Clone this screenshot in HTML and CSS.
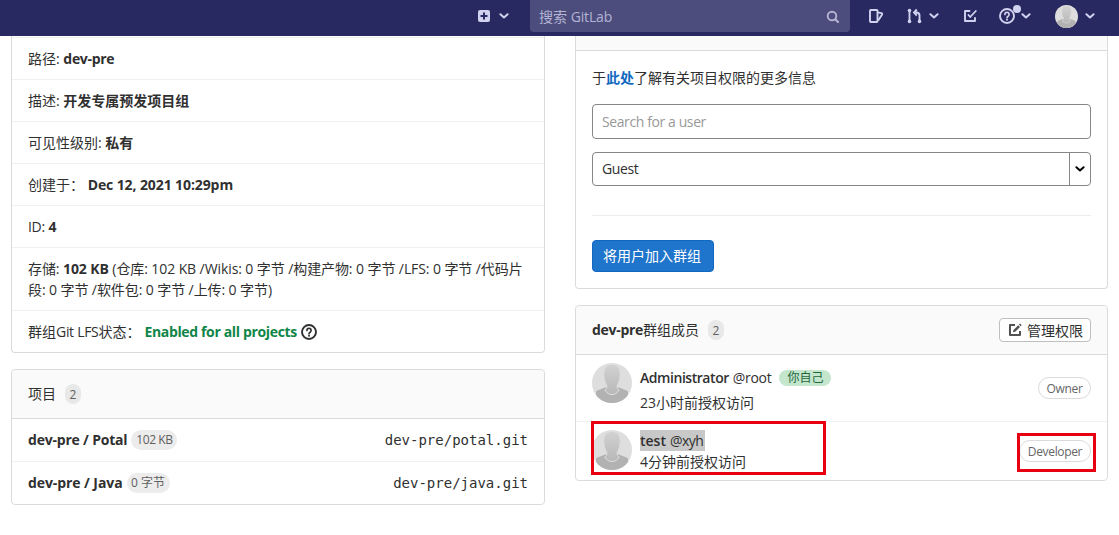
FILE: index.html
```
<!DOCTYPE html>
<html lang="zh-CN">
<head>
  <meta charset="UTF-8">
  <meta name="viewport" content="width=device-width, initial-scale=1.0">
  <title>dev-pre · 群组 · GitLab</title>
  <link rel="stylesheet" href="styles.css">
</head>
<body>

  <!-- 公用图标 -->
  <svg class="sprite" aria-hidden="true">
    <symbol id="chevron" viewBox="0 0 10 6">
      <path d="M1.4 1.2 5 4.4l3.6-3.2" fill="none" stroke="currentColor" stroke-width="2" stroke-linecap="round" stroke-linejoin="round"/>
    </symbol>
    <symbol id="todo" viewBox="0 0 14 14">
      <path d="M6.500 2H2v10h10V9" fill="none" stroke="currentColor" stroke-width="1.900" stroke-linejoin="round" stroke-linecap="round"/>
      <path d="M5.500 6 7.200 8 12.800 2" fill="none" stroke="currentColor" stroke-width="1.800" stroke-linecap="round" stroke-linejoin="round"/>
    </symbol>
    <symbol id="edit" viewBox="0 0 14 14">
      <path d="M7 2H2v10h10V8" fill="none" stroke="currentColor" stroke-width="2" stroke-linejoin="round"/>
      <path d="M5 9.300 5.500 7 10.200 2.200 12 4 7.200 8.800z" fill="currentColor"/>
      <path d="M10.900 1.500 12 .5 13.700 2.200 12.700 3.300z" fill="currentColor"/>
    </symbol>
    <symbol id="question" viewBox="0 0 16 16">
      <circle cx="8" cy="8" r="7" fill="none" stroke="currentColor" stroke-width="1.9"/>
      <path d="M5.9 6.4a2.1 2.1 0 1 1 3.2 1.8c-.8.5-1.1.8-1.1 1.5" fill="none" stroke="currentColor" stroke-width="1.7" stroke-linecap="round"/>
      <circle cx="8" cy="11.8" r="1" fill="currentColor"/>
    </symbol>
    <linearGradient id="face" x1="0" y1="0" x2="0" y2="1">
      <stop offset="0" stop-color="#d2d2d2"/>
      <stop offset="1" stop-color="#b8b8b8"/>
    </linearGradient>
    <clipPath id="round"><circle cx="20" cy="20" r="20"/></clipPath>
    <symbol id="avatar" viewBox="0 0 40 40">
      <g clip-path="url(#round)">
        <rect width="40" height="40" fill="#dedede"/>
        <path d="M4 40V28.500c2-1.800 6-2.500 9-4h14c3 1.500 7 2.200 9 4V40z" fill="#b2b2b2"/>
        <path d="M20 1.500c6 0 8.500 4 8.200 10.500-.2 5-1.700 8-3 10.500-.5 3 .8 3.500 2 4.500-1.500 3-4 4.500-7.200 4.500s-5.700-1.500-7.200-4.500c1.200-1 2.500-1.500 2-4.500-1.300-2.500-2.800-5.500-3-10.500C11.500 5.500 14 1.500 20 1.500z" fill="url(#face)" stroke="#dedede" stroke-width="1"/>
      </g>
    </symbol>
  </svg>

  <header class="navbar">
    <div class="nav-item nav-new">
      <svg width="12" height="12" viewBox="0 0 12 12">
        <rect width="12" height="12" rx="2" fill="currentColor"/>
        <path d="M6 2.500v7M2.500 6h7" stroke="#292961" stroke-width="2"/>
      </svg>
      <svg class="chev" width="10" height="6"><use href="#chevron"/></svg>
    </div>
    <div class="search">
      <span>搜索 <span class="gitlab">GitLab</span></span>
      <svg width="14" height="14" viewBox="0 0 14 14" fill="none" stroke="currentColor">
        <circle cx="6" cy="6" r="4.300" stroke-width="1.900"/>
        <path d="M9.500 9.500 12 12" stroke-width="2.200" stroke-linecap="round"/>
      </svg>
    </div>
    <svg class="nav-issues" width="15" height="14" viewBox="0 0 15 14" fill="none" stroke="currentColor" stroke-width="1.900" stroke-linejoin="round">
      <rect x="1" y="1" width="7.500" height="12" rx=".8"/>
      <path d="M8.800 3.300 12.500 4.200q1 .3.600 1.200L9.200 11.500"/>
    </svg>
    <div class="nav-item nav-mr">
      <svg width="15" height="16" viewBox="0 0 15 16" fill="none" stroke="currentColor" stroke-width="1.900">
        <path d="M2.500 3v10M12.500 13V7.500q0-3-3-3H8M9.800 1.500 7 4.500l2.800 3"/>
        <g fill="currentColor" stroke="none">
          <circle cx="2.500" cy="2.600" r="1.800"/>
          <circle cx="2.500" cy="13.400" r="1.800"/>
          <circle cx="12.500" cy="13.400" r="1.800"/>
        </g>
      </svg>
      <svg class="chev" width="10" height="6"><use href="#chevron"/></svg>
    </div>
    <svg class="nav-todo" width="14" height="14"><use href="#todo"/></svg>
    <div class="nav-item nav-help">
      <svg width="16" height="16"><use href="#question"/></svg>
      <span class="dot"></span>
      <svg class="chev" width="10" height="6"><use href="#chevron"/></svg>
    </div>
    <div class="nav-item nav-user">
      <svg width="23" height="23"><use href="#avatar"/></svg>
      <svg class="chev" width="10" height="6"><use href="#chevron"/></svg>
    </div>
  </header>

  <main class="content">
    <div class="col">
      <!-- 群组信息 -->
      <section class="card card-cut">
        <ul class="info">
          <li>路径: <b class="latb">dev-pre</b></li>
          <li>描述: <b>开发专属预发项目组</b></li>
          <li>可见性级别: <b>私有</b></li>
          <li>创建于： <b class="date">Dec 12, 2021 10:29pm</b></li>
          <li><span class="lat">ID:</span> <b>4</b></li>
          <li class="storage">存储: <b>102 KB</b> (仓库: 102 KB /Wikis: 0 字节 /构建产物: 0 字节 /LFS: 0 字节 /代码片<br>段: 0 字节 /软件包: 0 字节 /上传: 0 字节)</li>
          <li class="lfs">群组<span class="lat">Git LFS</span>状态： <b class="enabled">Enabled for all projects</b><svg width="16" height="16"><use href="#question"/></svg></li>
        </ul>
      </section>

      <!-- 项目列表 -->
      <section class="card">
        <div class="card-header"><span class="title">项目</span> <span class="count">2</span></div>
        <ul class="projects">
          <li><b>dev-pre / Potal</b><span class="size">102 KB</span><code>dev-pre/potal.git</code></li>
          <li><b class="java">dev-pre / Java</b><span class="size size-zero">0 字节</span><code>dev-pre/java.git</code></li>
        </ul>
      </section>
    </div>

    <div class="col">
      <!-- 添加用户 -->
      <section class="card card-cut">
        <div class="header-cut"></div>
        <form class="add-user">
          <p>于<a href="#">此处</a>了解有关项目权限的更多信息</p>
          <div class="field">Search for a user</div>
          <div class="select">
            <span>Guest</span>
            <i><svg width="10" height="6"><use href="#chevron"/></svg></i>
          </div>
          <hr>
          <button type="button" class="btn-add">将用户加入群组</button>
        </form>
      </section>

      <!-- 群组成员 -->
      <section class="card members">
        <div class="card-header">
          <span class="title"><b class="latb">dev-pre</b>群组成员</span> <span class="count">2</span>
          <button type="button" class="btn-manage"><svg width="14" height="14"><use href="#edit"/></svg>管理权限</button>
        </div>
        <ul>
          <li>
            <svg class="face" width="40" height="40"><use href="#avatar"/></svg>
            <div class="who">
              <div class="name"><b class="admin">Administrator</b> <span class="lat">@root</span><span class="you">你自己</span></div>
              <div class="since">23小时前授权访问</div>
            </div>
            <span class="role owner">Owner</span>
          </li>
          <li class="second">
            <svg class="face" width="40" height="40"><use href="#avatar"/></svg>
            <div class="who">
              <div class="name picked"><b class="test">test</b> <span class="xyh">@xyh</span></div>
              <div class="since">4分钟前授权访问</div>
            </div>
            <span class="role developer">Developer</span>
            <span class="mark mark-user"></span>
            <span class="mark mark-role"></span>
          </li>
        </ul>
      </section>
    </div>
  </main>

</body>
</html>
```
FILE: styles.css
```
* {
  box-sizing: border-box;
}
body {
  margin: 0;
  background: #fff;
  color: #303030;
  font: 14px/21px "Open Sans", "Noto Sans CJK SC", sans-serif;
  overflow: hidden;
}
ul {
  list-style: none;
  margin: 0;
  padding: 0;
}
b { font-weight: 700; }
svg { display: block; flex: none; }
button {
  font: inherit;
  white-space: nowrap;
}
.sprite {
  position: absolute;
  width: 0;
  height: 0;
}
.lat { letter-spacing: -0.3px; }
.latb { letter-spacing: -0.3px; }

/* 顶部导航 */
.navbar {
  display: flex;
  height: 36px;
  padding-left: 478px;
  background: #292961;
  color: #d1d1f0;
}
.navbar > * { flex: none; }
.nav-item {
  display: flex;
  align-items: center;
  height: 32px;
}
.nav-new { width: 52px; }
.nav-new .chev { margin-left: 9px; }
.search {
  display: flex;
  align-items: center;
  justify-content: space-between;
  width: 320px;
  height: 32px;
  padding: 1px 10px 0 9px;
  border-radius: 0 0 4px 4px;
  background: #4d4d7d;
  color: #b3b3d4;
}
.gitlab { letter-spacing: -0.15px; }
.nav-issues { margin: 9px 0 0 19px; }
.nav-mr { margin-left: 23px; }
.nav-mr .chev { margin-left: 7px; }
.nav-todo { margin: 9px 0 0 24px; }
.nav-help {
  position: relative;
  margin-left: 22px;
}
.nav-help .chev { margin-left: 6px; }
.dot {
  position: absolute;
  left: 14px;
  top: 5px;
  width: 8px;
  height: 8px;
  border-radius: 50%;
  background: #d1d1f0;
}
.nav-user { margin-left: 24px; }
.nav-user .chev { margin-left: 7px; }

/* 布局 */
.content {
  display: grid;
  grid-template-columns: 534px 533px;
  gap: 30px;
  padding-left: 11px;
  align-items: start;
}
.card {
  border: 1px solid #dbdbdb;
  border-radius: 4px;
  margin-bottom: 16px;
}
/* 被导航遮住上沿的卡片 */
.card-cut {
  border-top: 0;
  border-radius: 0 0 4px 4px;
}
.card-header {
  display: flex;
  align-items: center;
  height: 49px;
  padding: 0 16px;
  border-bottom: 1px solid #dbdbdb;
  border-radius: 4px 4px 0 0;
  background: #fafafa;
}
.title { padding-bottom: 2px; }
.count {
  width: 16px;
  height: 20px;
  margin-left: 9px;
  border-radius: 10px;
  background: #e8e8e8;
  color: #606060;
  font-size: 12px;
  line-height: 21px;
  text-align: center;
}

/* 群组信息 */
.info { padding-top: 1px; }
.info li {
  padding: 10px 16px;
  border-top: 1px solid #f0f0f0;
  white-space: nowrap;
}
.date { letter-spacing: -0.1px; }
.storage { letter-spacing: -0.09px; }
.lfs { display: flex; align-items: center; }
.enabled {
  margin: 0 4px 0 4px;
  color: #108548;
  letter-spacing: -0.35px;
}

/* 项目 */
.projects li {
  display: flex;
  align-items: center;
  height: 43px;
  padding: 0 17px 0 16px;
}
.projects li + li {
  height: 42px;
}
.projects li:first-child { border-bottom: 1px solid #f0f0f0; }
.projects b {
  padding-bottom: 1px;
  letter-spacing: -0.2px;
}
.projects .java { letter-spacing: -0.08px; }
.size {
  width: 46px;
  margin-left: 4px;
  border-radius: 10px;
  background: #ececec;
  color: #606060;
  font-size: 12px;
  letter-spacing: -0.4px;
  line-height: 20px;
  height: 20px;
  text-align: center;
}
.size-zero {
  width: 43px;
  letter-spacing: 0;
}
.projects code {
  margin: 0 -1px 0 auto;
  font-family: "DejaVu Sans Mono", monospace;
  font-size: 14px;
}

/* 添加用户 */
.header-cut {
  height: 15px;
  border-bottom: 1px solid #dbdbdb;
  background: #fafafa;
}
.add-user { padding: 16px; }
.add-user p { margin: 0 0 16px; }
.add-user a {
  color: #1068bf;
  font-weight: 700;
  text-decoration: none;
}
.field {
  height: 35px;
  padding: 6px 9px;
  border: 1px solid #868686;
  border-radius: 4px;
  color: #999;
  letter-spacing: -0.4px;
}
.select {
  display: flex;
  justify-content: space-between;
  height: 34px;
  margin-top: 13px;
  border: 1px solid #868686;
  border-radius: 4px;
}
.select span { padding: 5px 9px; letter-spacing: -0.4px; }
.select i {
  display: flex;
  align-items: center;
  justify-content: center;
  width: 21px;
  border-left: 1px solid #868686;
  color: #000;
}
hr {
  margin: 29px 0 24px;
  border: 0;
  border-top: 1px solid #ececec;
}
.btn-add {
  display: block;
  width: 122px;
  height: 32px;
  padding: 0 2px 2px 0;
  border: 1px solid #1068bf;
  border-radius: 4px;
  background: #1f75cb;
  color: #fff;
}

/* 成员 */
.btn-manage {
  display: flex;
  align-items: center;
  gap: 5px;
  width: 92px;
  height: 24px;
  margin-left: auto;
  padding: 0 7px 0 8px;
  border: 1px solid #bfbfbf;
  border-radius: 4px;
  background: #fff;
  color: #303030;
}
.btn-manage svg { color: #525252; }
.members li {
  position: relative;
  display: flex;
  align-items: flex-start;
  height: 67px;
  padding: 8px 16px 0;
  border-bottom: 1px solid #f0f0f0;
}
.members li.second {
  height: 58px;
  border-bottom: 0;
}
.who { margin-left: 8px; }
.name {
  display: flex;
  align-items: center;
  gap: 4px;
  height: 21px;
  margin-top: 4px;
}
.name .admin {
  font-weight: 600;
  letter-spacing: -0.45px;
}
.since { margin-top: 4px; }
.you {
  width: 52px;
  margin-left: 4px;
  border-radius: 8px;
  background: #c3e6cd;
  color: #24663b;
  font-size: 12px;
  line-height: 16px;
  text-align: center;
}
.second .name {
  width: 65px;
  margin-top: 0;
}
.test { font-weight: 600; }
.xyh { letter-spacing: -0.5px; }
.second .since { margin-top: 0; }
.picked { background: #c8c8c8; }
.role {
  height: 22px;
  margin: 14px 0 0 auto;
  border: 1px solid #dbdbdb;
  border-radius: 11px;
  color: #666;
  font-size: 12px;
  letter-spacing: -0.35px;
  line-height: 22px;
  text-align: center;
}
.owner { width: 53px; }
.developer {
  width: 72px;
  margin-top: 10px;
}

/* 红框标注 */
.mark {
  position: absolute;
  border: 3px solid #e60012;
}
.mark-user {
  left: 15px;
  top: -1px;
  width: 235px;
  height: 54px;
}
.mark-role {
  right: 11px;
  top: 11px;
  width: 79px;
  height: 39px;
}
```
